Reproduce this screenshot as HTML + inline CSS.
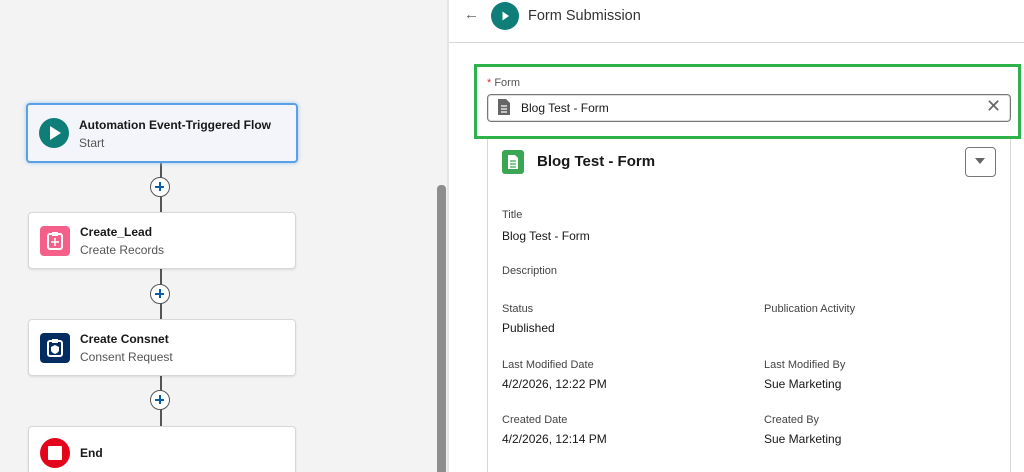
<html><head><style>
html,body{margin:0;width:1024px;height:472px;overflow:hidden}
body{font-family:"Liberation Sans",sans-serif;position:relative;background:#fff}
.abs{position:absolute}
.node{position:absolute;left:28px;width:266px;height:55px;background:#fff;border:1px solid #d8d8d8;border-radius:4px;box-shadow:0 1px 2px rgba(0,0,0,.1)}
.node .t{position:absolute;left:51px;top:12px;font-size:12px;font-weight:bold;color:#181818}
.node .s{position:absolute;left:51px;top:30px;font-size:12px;color:#555}
.node .i{position:absolute;left:11px;top:13px;width:30px;height:30px}
.plus{position:absolute;left:150px;width:20px;height:20px;border:1.5px solid #555;border-radius:50%;background:#fff;box-sizing:border-box}
.plus:before{content:"";position:absolute;left:4px;top:8px;width:9px;height:2px;background:#0b5cab}
.plus:after{content:"";position:absolute;left:7.5px;top:4px;width:2px;height:9px;background:#0b5cab}
.lbl{position:absolute;font-size:11px;color:#444}
.val{position:absolute;font-size:12px;color:#181818}
</style></head><body>
<div class="abs" style="left:0;top:0;width:447px;height:472px;background:#f3f3f3"></div>
<div class="abs" style="left:160px;top:161px;width:2px;height:265px;background:#555"></div>
<div class="abs" style="left:437px;top:185px;width:9px;height:287px;background:#8e8e8e;border-radius:4px 4px 0 0"></div>
<div class="abs" style="left:447px;top:0;width:2px;height:472px;background:#e5e5e5"></div>

<div class="node" style="top:103px;height:56px;background:#f3f5fa;border:2px solid #5aa0e6;left:26px;width:268px;box-shadow:0 0 4px #9cc6f2">
 <svg class="i" viewBox="0 0 30 30" style="left:11px;top:13px"><circle cx="15" cy="15" r="15" fill="#0f7e78"/><path d="M11 8 L22 15 L11 22Z" fill="#fff"/></svg>
 <div class="t" style="top:13px">Automation Event-Triggered Flow</div><div class="s" style="top:31px">Start</div></div>
<div class="plus" style="top:177px"></div>
<div class="node" style="top:212px">
 <svg class="i" viewBox="0 0 30 30"><rect width="30" height="30" rx="4" fill="#f4608a"/><rect x="8" y="8" width="14" height="15" rx="2" fill="none" stroke="#fff" stroke-width="2"/><rect x="12" y="6" width="6" height="4" fill="#fff"/><path d="M15 12v8M11 16h8" stroke="#fff" stroke-width="1.6"/></svg>
 <div class="t">Create_Lead</div><div class="s">Create Records</div></div>
<div class="plus" style="top:284px"></div>
<div class="node" style="top:319px">
 <svg class="i" viewBox="0 0 30 30"><rect width="30" height="30" rx="4" fill="#032d60"/><rect x="8" y="8" width="14" height="15" rx="2" fill="none" stroke="#fff" stroke-width="2"/><rect x="12" y="6" width="6" height="4" fill="#fff"/><path d="M15 12l4 2v3c0 2-2 3-4 4-2-1-4-2-4-4v-3z" fill="#fff"/></svg>
 <div class="t">Create Consnet</div><div class="s">Consent Request</div></div>
<div class="plus" style="top:390px"></div>
<div class="node" style="top:426px;height:46px;border-bottom:none;border-radius:4px 4px 0 0">
 <svg class="i" viewBox="0 0 30 30" style="top:11px"><circle cx="15" cy="15" r="15" fill="#e3061b"/><rect x="8" y="8" width="14" height="14" rx="1" fill="#fff"/></svg>
 <div class="t" style="top:19px">End</div></div>

<div class="abs" style="left:449px;top:42px;width:575px;height:1px;background:#d8d8d8"></div>
<div class="abs" style="left:464px;top:6px;font-size:15px;color:#666">←</div>
<svg class="abs" style="left:490px;top:1px" width="30" height="30" viewBox="0 0 30 30"><circle cx="15" cy="15" r="14" fill="#0f7e78"/><path d="M12.5 10.5 L19 15 L12.5 19.5Z" fill="#fff"/></svg>
<div class="abs" style="left:528px;top:8px;font-size:14.5px;color:#333">Form Submission</div>

<div class="abs" style="left:487px;top:134px;width:522px;height:338px;border:1px solid #d8d8d8;border-bottom:none;border-radius:4px 4px 0 0"></div>
<div class="abs" style="left:474px;top:64px;width:541px;height:69px;border:3px solid #2db34a;background:#fff"></div>
<div class="abs" style="left:487px;top:77px;font-size:11px;color:#555"><span style="color:#c23934">*</span> Form</div>
<div class="abs" style="left:487px;top:94px;width:522px;height:26px;border:1px solid #777;border-radius:4px;box-shadow:inset 0 0 0 1px #ddd"></div>
<svg class="abs" style="left:496px;top:98px" width="16" height="18" viewBox="0 0 16 18"><path d="M2 1h8l4 4v12H2z" fill="#666"/><path d="M5 8h6M5 11h6M5 14h6" stroke="#fff" stroke-width="1.3"/></svg>
<div class="abs" style="left:521px;top:101px;font-size:12px;color:#181818">Blog Test - Form</div>
<div class="abs" style="left:986px;top:96px;font-size:18px;color:#666">✕</div>

<svg class="abs" style="left:502px;top:150px" width="22" height="24" viewBox="0 0 22 24"><rect width="22" height="24" rx="3" fill="#3ba755"/><path d="M6 5h7l3 3v11H6z" fill="#fff"/><path d="M8 11h6M8 14h6M8 17h6" stroke="#3ba755" stroke-width="1.2"/></svg>
<div class="abs" style="left:537px;top:153px;font-size:15px;font-weight:bold;color:#181818">Blog Test - Form</div>
<div class="abs" style="left:965px;top:147px;width:29px;height:28px;border:1px solid #777;border-radius:4px"></div>
<div class="abs" style="left:975px;top:158px;width:0;height:0;border-left:5px solid transparent;border-right:5px solid transparent;border-top:6px solid #666"></div>

<div class="lbl" style="left:502px;top:209px">Title</div><div class="val" style="left:502px;top:229px">Blog Test - Form</div>
<div class="lbl" style="left:502px;top:265px">Description</div>
<div class="lbl" style="left:502px;top:303px">Status</div><div class="val" style="left:502px;top:321px">Published</div>
<div class="lbl" style="left:764px;top:303px">Publication Activity</div>
<div class="lbl" style="left:502px;top:359px">Last Modified Date</div><div class="val" style="left:502px;top:377px">4/2/2026, 12:22 PM</div>
<div class="lbl" style="left:764px;top:359px">Last Modified By</div><div class="val" style="left:764px;top:377px">Sue Marketing</div>
<div class="lbl" style="left:502px;top:414px">Created Date</div><div class="val" style="left:502px;top:432px">4/2/2026, 12:14 PM</div>
<div class="lbl" style="left:764px;top:414px">Created By</div><div class="val" style="left:764px;top:432px">Sue Marketing</div>
</body></html>
